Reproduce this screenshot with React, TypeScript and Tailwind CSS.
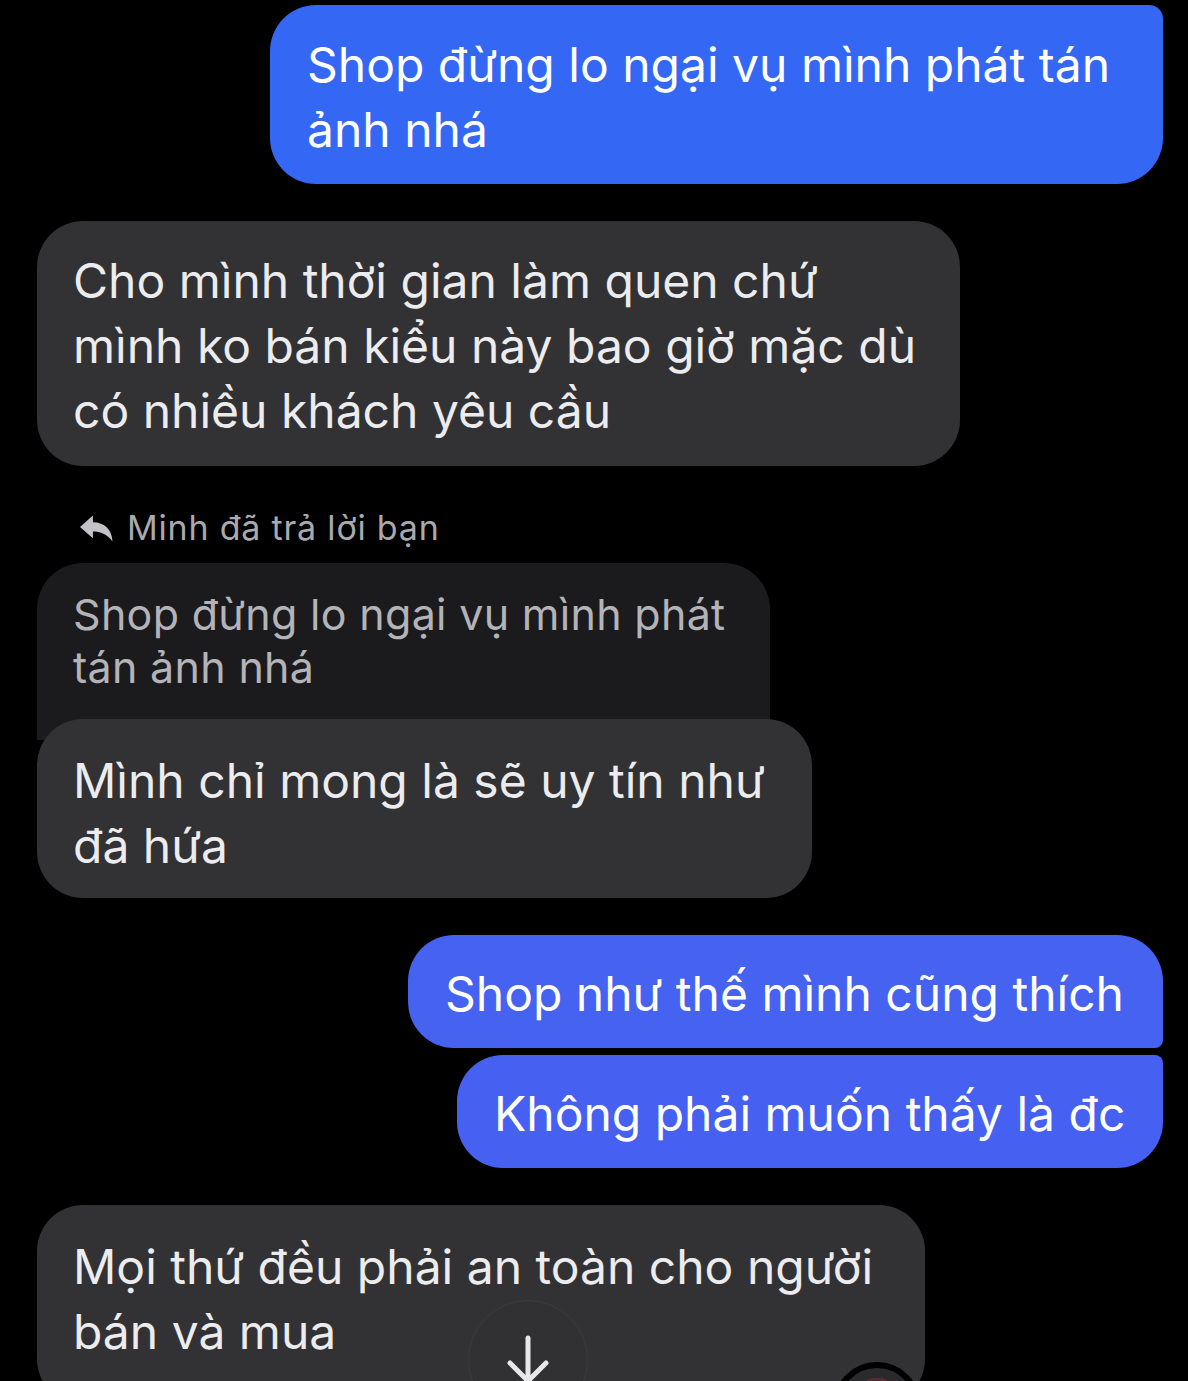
import React from "react";

const font = { fontFamily: "Inter, 'Noto Sans', sans-serif" };

function ReplyIcon() {
  return (
    <svg width="33" height="27" viewBox="0 0 32 26" fill="#c2c2c7">
      <path d="M12.5 0.5 L0 11.5 L12.5 22.5 V16 C20 16 26 18.5 31.5 25.5 C31 14.5 24 7 12.5 7 Z" />
    </svg>
  );
}

export default function App() {
  return (
    <div
      className="relative w-[1188px] h-[1381px] overflow-hidden bg-black text-[48px] leading-[65px] tracking-[0px]"
      style={font}
    >
      <div className="flex flex-col pt-[5px] pl-[37px] pr-[25px]">
        {/* outgoing */}
        <div className="self-end w-[893px] h-[179px] bg-[#3468f4] text-white rounded-[46px] rounded-tr-[14px] pl-[37px] pt-[27px]">
          Shop đừng lo ngại vụ mình phát tán
          <br />
          ảnh nhá
        </div>

        {/* incoming */}
        <div className="mt-[37px] w-[923px] h-[245px] bg-[#323234] text-[#ececee] rounded-[46px] pl-[36px] pt-[27px]">
          Cho mình thời gian làm quen chứ
          <br />
          mình ko bán kiểu này bao giờ mặc dù
          <br />
          có nhiều khách yêu cầu
        </div>

        {/* reply label */}
        <div className="mt-[42px] ml-[43px] flex items-center gap-[14px] h-[40px] text-[34px] leading-[40px] text-[#a9a9ae] tracking-[0.8px]">
          <ReplyIcon />
          <span>Minh đã trả lời bạn</span>
        </div>

        {/* quoted */}
        <div className="mt-[15px] w-[733px] h-[177px] bg-[#1b1b1d] text-[#b3b3b8] rounded-t-[46px] pl-[36px] pt-[25px] text-[43px] leading-[53px] tracking-[0.3px]">
          Shop đừng lo ngại vụ mình phát
          <br />
          tán ảnh nhá
        </div>

        <div className="-mt-[21px] w-[775px] h-[179px] bg-[#323234] text-[#ececee] rounded-[46px] pl-[36px] pt-[29px]">
          Mình chỉ mong là sẽ uy tín như
          <br />
          đã hứa
        </div>

        {/* outgoing group */}
        <div className="self-end mt-[37px] w-[755px] h-[113px] bg-[#4662f1] text-white rounded-[46px] rounded-br-[8px] pl-[37px] pt-[26px]">
          Shop như thế mình cũng thích
        </div>
        <div className="self-end mt-[7px] w-[706px] h-[113px] bg-[#4661f1] text-white rounded-[46px] rounded-tr-[8px] pl-[37px] pt-[26px]">
          Không phải muốn thấy là đc
        </div>

        {/* incoming */}
        <div className="mt-[37px] w-[888px] h-[200px] bg-[#323234] text-[#ececee] rounded-[46px] pl-[36px] pt-[29px]">
          Mọi thứ đều phải an toàn cho người
          <br />
          bán và mua
        </div>
      </div>

      {/* scroll to bottom button */}
      <div className="absolute left-[468px] top-[1300px] w-[120px] h-[120px] rounded-full bg-[#313133] border border-[#3b3b3e] flex justify-center pt-[34px]">
        <svg width="44" height="48" viewBox="0 0 44 48" fill="none" stroke="#e8e8ea" strokeWidth="5" strokeLinecap="round" strokeLinejoin="round">
          <path d="M22 3 V46" />
          <path d="M4 28 L22 46 L40 28" />
        </svg>
      </div>

      {/* reaction badge */}
      <div className="absolute left-[833px] top-[1362px] w-[88px] h-[88px] rounded-full bg-[#2a2a2c] border-[6px] border-black flex justify-center pt-[10px]">
        <div className="w-[22px] h-[12px] rounded-full bg-[#5a2a2c]" />
      </div>
    </div>
  );
}
